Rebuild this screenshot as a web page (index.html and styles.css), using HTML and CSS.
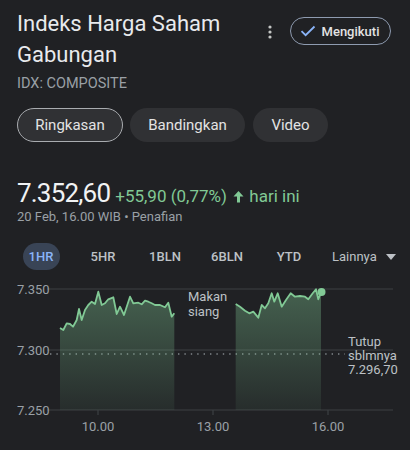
FILE: index.html
```html
<!DOCTYPE html>
<html lang="id">
<head>
	<meta charset="UTF-8">
	<title>Indeks Harga Saham Gabungan</title>
	<link rel="stylesheet" href="styles.css">
</head>
<body>
	<div class="page">
		<div class="head">
			<h1 class="title">Indeks Harga Saham Gabungan</h1>
			<span class="more">
				<svg width="4" height="14" viewBox="0 0 4 14"><circle cx="2" cy="2" r="1.6"/><circle cx="2" cy="7" r="1.6"/><circle cx="2" cy="12" r="1.6"/></svg>
			</span>
			<button class="follow">
				<svg width="16" height="12" viewBox="0 0 16 12"><path d="M1.5 6.2 L5.6 10.2 L14.5 1.5" fill="none" stroke="#8ab4f8" stroke-width="1.8"/></svg>
				Mengikuti
			</button>
		</div>
		<p class="ticker">IDX: COMPOSITE</p>
		<div class="chips">
			<span class="chip active">Ringkasan</span>
			<span class="chip">Bandingkan</span>
			<span class="chip">Video</span>
		</div>
		<div class="quote">
			<span class="price">7.352,60</span>
			<span class="change">+55,90 (0,77%)
				<svg width="11" height="13" viewBox="0 0 11 13"><path d="M5.5 1 L10.5 6.5 H7 V12.5 H4 V6.5 H0.5 Z" fill="#81c995"/></svg>
				hari ini</span>
		</div>
		<p class="meta">20 Feb, 16.00 WIB • Penafian</p>
		<div class="ranges">
			<span class="range on">1HR</span>
			<span class="range">5HR</span>
			<span class="range">1BLN</span>
			<span class="range">6BLN</span>
			<span class="range">YTD</span>
			<span class="more-range">Lainnya
				<svg width="10" height="6" viewBox="0 0 10 6"><path d="M0 0 H10 L5 6 Z" fill="#bdc1c6"/></svg>
			</span>
		</div>
		<svg class="chart" width="410" height="165" viewBox="0 275 410 165">
			<defs>
				<linearGradient id="fade" x1="0" y1="0" x2="0" y2="1">
					<stop offset="0" stop-color="#81c995" stop-opacity="0.38"/>
					<stop offset="1" stop-color="#81c995" stop-opacity="0.07"/>
				</linearGradient>
			</defs>
			<g class="grid">
				<line x1="47" y1="289" x2="393" y2="289"/>
				<line x1="47" y1="350" x2="393" y2="350"/>
				<line x1="47" y1="410" x2="393" y2="410"/>
				<line x1="98" y1="410" x2="98" y2="415"/>
				<line x1="213" y1="410" x2="213" y2="415"/>
				<line x1="328" y1="410" x2="328" y2="415"/>
			</g>
			<line class="prev" x1="50" y1="354" x2="345" y2="354"/>
			<path class="area" d="M60 328 L63.3 330 L66.7 323.3 L70 324 L73 326.7 L76.7 320 L79 309 L81.7 320 L85 310 L88.3 305 L91.7 301.7 L95 304 L98.3 291.7 L101.7 305 L105 303.3 L108.3 299.3 L113.3 297.3 L116.7 314 L120 306.7 L124 315 L130 296.7 L133.3 303.3 L138.3 302.7 L141.7 304.3 L145 300.7 L148.3 301.7 L151.7 303.3 L155 305 L160 305 L165 307.3 L168.3 302.7 L171.7 316.7 L174.3 313.3 L174.3 410 L60 410 Z"/>
			<path class="area" d="M235.7 304 L240 306.7 L245 310.7 L249.3 313.3 L253.3 311.7 L258.3 317.7 L261.7 305 L265 308.3 L268.3 303.3 L271.7 293.3 L274.3 301.7 L277.7 293.3 L281.7 306.7 L286 300 L290.7 293.3 L295 296.7 L300 296 L305 296.7 L308.3 299.3 L312.7 293.3 L316 289.3 L318.3 299.3 L321 292.3 L321 410 L235.7 410 Z"/>
			<path class="line" d="M60 328 L63.3 330 L66.7 323.3 L70 324 L73 326.7 L76.7 320 L79 309 L81.7 320 L85 310 L88.3 305 L91.7 301.7 L95 304 L98.3 291.7 L101.7 305 L105 303.3 L108.3 299.3 L113.3 297.3 L116.7 314 L120 306.7 L124 315 L130 296.7 L133.3 303.3 L138.3 302.7 L141.7 304.3 L145 300.7 L148.3 301.7 L151.7 303.3 L155 305 L160 305 L165 307.3 L168.3 302.7 L171.7 316.7 L174.3 313.3"/>
			<path class="line" d="M235.7 304 L240 306.7 L245 310.7 L249.3 313.3 L253.3 311.7 L258.3 317.7 L261.7 305 L265 308.3 L268.3 303.3 L271.7 293.3 L274.3 301.7 L277.7 293.3 L281.7 306.7 L286 300 L290.7 293.3 L295 296.7 L300 296 L305 296.7 L308.3 299.3 L312.7 293.3 L316 289.3 L318.3 299.3 L321 292.3"/>
			<circle cx="321.5" cy="292" r="4" fill="#81c995"/>
			<g class="axis">
				<text x="17" y="294">7.350</text>
				<text x="17" y="355">7.300</text>
				<text x="17" y="415">7.250</text>
				<text x="98" y="431" text-anchor="middle">10.00</text>
				<text x="213" y="431" text-anchor="middle">13.00</text>
				<text x="328" y="431" text-anchor="middle">16.00</text>
			</g>
			<g class="note">
				<text x="188" y="301">Makan</text>
				<text x="188" y="316">siang</text>
				<text x="348" y="346">Tutup</text>
				<text x="348" y="360">sblmnya</text>
				<text x="348" y="374">7.296,70</text>
			</g>
		</svg>
	</div>
</body>
</html>
```

FILE: styles.css
```css
*{padding:0;margin:0;box-sizing:border-box;}
html,body{background:#202124;}
body{width:410px;height:450px;overflow:hidden;font-family:Roboto,"Liberation Sans",Arial,sans-serif;color:#e8eaed;}
.head{display:flex;align-items:flex-start;padding:8px 17px 0 17px;}
.title{width:238px;font-size:22px;font-weight:400;line-height:31px;color:#e8eaed;}
.more{width:12px;margin:17px 0 0 9px;display:flex;justify-content:center;}
.more svg{fill:#c4c7c5;}
.follow{margin:9px 0 0 14px;height:28px;width:101px;border:1px solid #8e9bb0;border-radius:14px;background:#202124;color:#e3e3e3;font-family:inherit;font-size:13px;font-weight:500;display:flex;align-items:center;justify-content:center;gap:6px;padding:0 8px 0 6px;}
.ticker{margin:4px 0 0 17px;font-size:14.5px;line-height:20px;color:#9aa0a6;}
.chips{display:flex;gap:7px;padding:14px 0 0 17px;}
.chip{height:34px;border-radius:17px;background:#303134;display:flex;align-items:center;justify-content:center;font-size:15px;color:#e3e3e3;}
.chip:nth-child(1){width:106px;border:1px solid #a9acb0;}
.chip:nth-child(2){width:115px;}
.chip:nth-child(3){width:75px;margin-left:1px;}
.quote{display:flex;align-items:baseline;gap:5px;padding:35px 0 0 17px;}
.price{font-size:26px;letter-spacing:-0.8px;line-height:32px;color:#f1f3f4;}
.change{font-size:17px;color:#81c995;}
.change svg{margin:0 1px 0 2px;vertical-align:-1px;}
.meta{margin:0 0 0 17px;font-size:13px;line-height:16px;color:#9aa0a6;}
.ranges{display:grid;grid-template-columns:repeat(5,62px) auto;align-items:center;margin:18px 0 0 10px;height:27px;}
.range{justify-self:center;font-size:13px;font-weight:500;color:#bdc1c6;}
.range.on{background:#394456;color:#8ab4f8;border-radius:14px;height:27px;width:37px;display:flex;align-items:center;justify-content:center;}
.more-range{padding-left:12px;font-size:13px;color:#bdc1c6;display:flex;align-items:center;gap:9px;}
.chart{display:block;margin-top:5px;}
.grid line{stroke:#3c4043;stroke-width:1.2;}
.prev{stroke:#80868b;stroke-width:1.4;stroke-dasharray:1.4 5;}
.area{fill:url(#fade);}
.line{fill:none;stroke:#81c995;stroke-width:1.8;stroke-linejoin:round;}
.axis text{font-size:13px;fill:#9aa0a6;font-family:Roboto,"Liberation Sans",Arial,sans-serif;}
.note text{font-size:13px;fill:#bdc1c6;font-family:Roboto,"Liberation Sans",Arial,sans-serif;}
```
